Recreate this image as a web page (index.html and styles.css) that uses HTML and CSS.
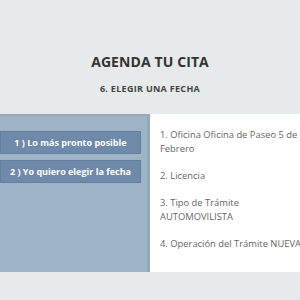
FILE: index.html
```html
<!DOCTYPE html>
<html>
<head>
<meta charset="utf-8">
<link rel="stylesheet" href="styles.css">
</head>
<body>
<div class="page">
  <header class="head">
    <h1 class="title">AGENDA TU CITA</h1>
    <h2 class="subtitle">6. ELEGIR UNA FECHA</h2>
  </header>
  <section class="content">
    <div class="options">
      <div class="btn">1 ) Lo más pronto posible</div>
      <div class="btn">2 ) Yo quiero elegir la fecha</div>
    </div>
    <div class="summary">
      <p>1. Oficina Oficina de Paseo 5 de Febrero</p>
      <p>2. Licencia</p>
      <p>3. Tipo de Trámite AUTOMOVILISTA</p>
      <p class="nowrap">4. Operación del Trámite NUEVA</p>
    </div>
  </section>
</div>
</body>
</html>
```

FILE: styles.css
```css
html, body {
  margin: 0;
  padding: 0;
  background: #e7eaea;
  overflow: hidden;
}
.page {
  width: 300px;
  height: 300px;
  font-family: "Open Sans", "Liberation Sans", sans-serif;
}
.head {
  height: 114px;
  display: flex;
  flex-direction: column;
  align-items: center;
  box-sizing: border-box;
  padding-top: 53px;
}
.title {
  margin: 0;
  font-size: 14px;
  font-weight: 700;
  color: #333;
  line-height: 18px;
  letter-spacing: 0.1px;
}
.subtitle {
  margin: 12px 0 0;
  font-size: 9px;
  font-weight: 700;
  color: #444;
  line-height: 12px;
  letter-spacing: 0.3px;
}
.content {
  display: flex;
  height: 158px;
}
.options {
  width: 150px;
  box-sizing: border-box;
  background: #9eb3c5;
  border-top: 2px solid #93a9bc;
  border-right: 3px solid #93a8bb;
  padding-top: 15px;
  display: flex;
  flex-direction: column;
  gap: 6px;
}
.btn {
  width: 141px;
  height: 23px;
  box-sizing: border-box;
  background: #6e89a9;
  border: 1px solid #64809f;
  color: #fff;
  font-size: 9px;
  font-weight: 700;
  display: flex;
  align-items: center;
  justify-content: center;
}
.summary {
  flex: 1;
  background: #fff;
  padding: 14px 0 0 10px;
  color: #666;
  font-size: 9.4px;
  line-height: 14px;
  overflow: hidden;
}
.summary p {
  margin: 0 0 13px;
}
.nowrap {
  white-space: nowrap;
}
```
